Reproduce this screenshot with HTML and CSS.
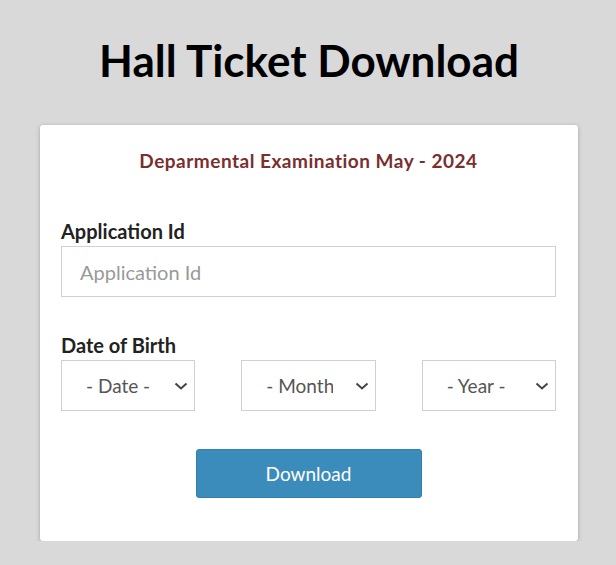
FILE: index.html
```html
<!DOCTYPE html>
<html lang="en">
<head>
  <meta charset="UTF-8">
  <meta name="viewport" content="width=device-width, initial-scale=1.0">
  <title>Hall Ticket Download</title>
  <link rel="stylesheet" href="styles.css">
</head>
<body>
  <div class="wrap">
    <h1>Hall Ticket Download</h1>
    <form class="card" id="ticketForm">
      <h2 class="exam">Deparmental Examination May - 2024</h2>

      <div class="field">
        <label for="appId">Application Id</label>
        <input type="text" id="appId" name="appId" placeholder="Application Id">
      </div>

      <div class="field">
        <label>Date of Birth</label>
        <div class="dob">
          <span class="sel">
            <select name="date">
              <option>- Date -</option>
            </select>
            <svg class="chev" width="14" height="8" viewBox="0 0 14 8"><path d="M1.5 1.5 L7 6.5 L12.5 1.5" fill="none" stroke="#444" stroke-width="2"/></svg>
          </span>
          <span class="sel">
            <select name="month">
              <option>- Month -</option>
            </select>
            <svg class="chev" width="14" height="8" viewBox="0 0 14 8"><path d="M1.5 1.5 L7 6.5 L12.5 1.5" fill="none" stroke="#444" stroke-width="2"/></svg>
          </span>
          <span class="sel">
            <select name="year">
              <option>- Year -</option>
            </select>
            <svg class="chev" width="14" height="8" viewBox="0 0 14 8"><path d="M1.5 1.5 L7 6.5 L12.5 1.5" fill="none" stroke="#444" stroke-width="2"/></svg>
          </span>
        </div>
      </div>

      <div class="actions">
        <button type="submit">Download</button>
      </div>
    </form>
  </div>
</body>
</html>
```

FILE: styles.css
```css
body {
  margin: 0;
  background: #d9d9d9;
  font-family: Lato, "Open Sans", sans-serif;
  color: #222;
}
.wrap {
  width: 538px;
  margin-left: 40px;
  padding-top: 34px;
}
h1 {
  margin: 0 0 38px;
  text-align: center;
  font-size: 44px;
  line-height: 53px;
  font-weight: 700;
  color: #000;
}
.card {
  background: #fff;
  border-radius: 3px;
  box-shadow: 0 1px 4px rgba(0, 0, 0, 0.25);
  padding: 24px 22px 43px 21px;
}
.exam {
  margin: 0 0 46px;
  text-align: center;
  font-size: 19px;
  letter-spacing: 0.5px;
  line-height: 24px;
  font-weight: 700;
  color: #7a2e2e;
}
.field {
  margin-bottom: 36px;
}
.field label {
  display: block;
  font-size: 20px;
  font-weight: 700;
  line-height: 24px;
  margin-bottom: 3px;
  color: #222;
}
.field input {
  display: block;
  box-sizing: border-box;
  width: 100%;
  height: 51px;
  padding: 0 18px;
  border: 1px solid #ccd1d9;
  font-family: inherit;
  font-size: 20px;
  color: #333;
}
.field input::placeholder {
  color: #999;
}
.dob {
  display: grid;
  grid-template-columns: repeat(3, 1fr);
  column-gap: 46px;
}
.sel {
  position: relative;
  display: block;
}
.sel select {
  display: block;
  box-sizing: border-box;
  width: 100%;
  height: 51px;
  padding: 0 42px 0 24px;
  border: 1px solid #ccd1d9;
  border-radius: 0;
  background: #fff;
  appearance: none;
  -webkit-appearance: none;
  font-family: inherit;
  font-size: 19px;
  color: #555;
}
.chev {
  position: absolute;
  right: 7px;
  top: 22px;
  pointer-events: none;
}
.actions {
  padding-top: 2px;
  text-align: center;
}
.actions button {
  width: 226px;
  height: 49px;
  background: #3b8bbb;
  border: 1px solid #3480ad;
  border-radius: 3px;
  color: #fff;
  font-family: inherit;
  font-size: 19px;
  cursor: pointer;
}
```
